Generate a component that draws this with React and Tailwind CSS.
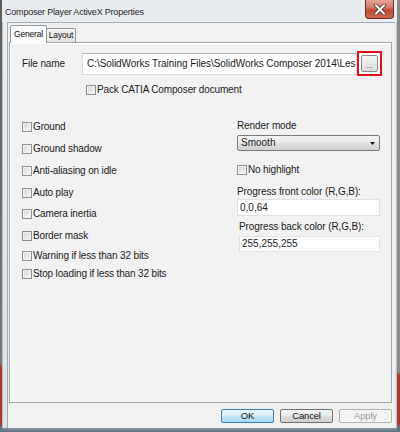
import React from 'react';

const leftChecks = [
    { label: 'Ground', mt: 'mt-0' },
    { label: 'Ground shadow', mt: 'mt-[10px]' },
    { label: 'Anti-aliasing on idle', mt: 'mt-[10px]' },
    { label: 'Auto play', mt: 'mt-[10px]' },
    { label: 'Camera inertia', mt: 'mt-[9px]' },
    { label: 'Border mask', mt: 'mt-[10px]' },
    { label: 'Warning if less than 32 bits', mt: 'mt-[8px]' },
    { label: 'Stop loading if less than 32 bits', mt: 'mt-[6px]' },
];

function Check({ label, className = '' }) {
    return (
        <div className={`flex items-center h-[12px] ${className}`}>
            <span className="w-[10px] h-[10px] shrink-0 border border-[#8f8f8f] bg-[linear-gradient(135deg,#d6d6d6,#f7f7f7)] shadow-[inset_0_0_0_1px_#f2f2f2]" />
            <span className="ml-[1px] text-[10px] leading-[12px] tracking-[-0.15px] text-[#1b1b1b] whitespace-nowrap">
                {label}
            </span>
        </div>
    );
}

function CloseButton() {
    return (
        <div className="mr-[3px] w-[29px] h-[19px] self-start rounded-b-[4px] border border-t-0 border-[#6b2a22] bg-[linear-gradient(to_bottom,#e4a596_0%,#d27563_45%,#bf4a36_55%,#cc6a55_100%)] flex items-center justify-center">
            <svg width="12" height="11" viewBox="0 0 12 11">
                <path d="M2 1.5 L10 9.5 M10 1.5 L2 9.5" stroke="#4a2a25" strokeWidth="3.6" strokeLinecap="square" />
                <path d="M2 1.5 L10 9.5 M10 1.5 L2 9.5" stroke="#ffffff" strokeWidth="2" strokeLinecap="square" />
            </svg>
        </div>
    );
}

function WinButton({ children, variant }) {
    const styles = {
        default: 'border-[#3c7fb1] bg-[linear-gradient(to_bottom,#eaf6fd_0%,#d9f0fc_45%,#bee6fd_55%,#a7d9f5_100%)] text-[#111]',
        normal: 'border-[#707070] bg-[linear-gradient(to_bottom,#f2f2f2_0%,#ebebeb_45%,#dddddd_55%,#cfcfcf_100%)] text-[#111]',
        disabled: 'border-[#adb2b5] bg-[#f4f4f4] text-[#9a9a9a]',
    };
    return (
        <div className={`w-[53px] h-[14px] rounded-[2px] border flex items-center justify-center text-[9.5px] leading-none tracking-[-0.2px] ${styles[variant]}`}>
            {children}
        </div>
    );
}

export default function App() {
    return (
        <div className="w-[400px] h-[432px] flex overflow-hidden font-['Liberation_Sans',Arial,sans-serif] select-none">
            {/* desktop behind, left */}
            <div className="w-[2px] bg-[linear-gradient(to_bottom,#5c5c5c_0%,#7a7a7a_84%,#a9392e_85%,#a9392e_98%,#5f7585_99%)]" />

            <div className="flex-1 flex flex-col">
                {/* window */}
                <div className="h-[428px] flex flex-col bg-[linear-gradient(to_bottom,#eaedf0,#dde2e7)]">
                    <div className="h-[22px] flex justify-between">
                        <div className="pl-[3px] pt-[7px] text-[9px] leading-[11px] tracking-[-0.2px] text-[#1e1e1e] whitespace-nowrap">
                            Composer Player ActiveX Properties
                        </div>
                        <CloseButton />
                    </div>

                    <div className="flex-1 flex">
                        <div className="w-[5px] border-l border-[#b9bfc5]" />

                        {/* client area */}
                        <div className="flex-1 flex flex-col bg-[#f0f0f0] border-t border-l border-[#a3abb3] pl-[1px] pr-[3px] pt-[2px]">
                            {/* tabs */}
                            <div className="h-[17px] flex items-end ml-[1px]">
                                <div className="relative z-10 w-[37px] h-[18px] -mb-px border border-b-0 border-[#8e9aa4] bg-[#fcfcfc] rounded-t-[2px] flex items-center justify-center text-[8.5px] tracking-[-0.2px] text-[#111]">
                                    General
                                </div>
                                <div className="w-[30px] h-[14px] -ml-px border border-b-0 border-[#8e9aa4] bg-[linear-gradient(to_bottom,#f5f5f5,#e3e3e3)] rounded-t-[2px] flex items-center justify-center text-[8.5px] tracking-[-0.2px] text-[#111]">
                                    Layout
                                </div>
                            </div>

                            {/* tab panel */}
                            <div className="h-[361px] border border-[#9ea6ae] bg-[#f2f2f2] shadow-[inset_1px_1px_0_#ffffff] pl-[12px] pt-[8px]">
                                <div className="flex items-center h-[25px]">
                                    <div className="w-[60px] text-[10px] leading-[12px] tracking-[-0.1px] text-[#1b1b1b]">
                                        File name
                                    </div>
                                    <div className="w-[275px] h-[22px] bg-white border border-[#d5dbe2] border-t-[#b7bcc3] pl-[4px] flex items-center overflow-hidden">
                                        <span className="text-[10px] leading-[12px] tracking-[-0.05px] text-[#1b1b1b] whitespace-nowrap">
                                            C:\SolidWorks Training Files\SolidWorks Composer 2014\Les
                                        </span>
                                    </div>
                                    <div className="w-[25px] h-[25px] border-[2px] border-[#e0101a] bg-white flex items-center justify-center">
                                        <div className="w-[17px] h-[17px] rounded-[2px] border border-[#8a8a8a] bg-[linear-gradient(to_bottom,#f4f4f4,#dcdcdc)] flex items-end justify-center pb-[2px] text-[7px] leading-none text-[#333]">
                                            ...
                                        </div>
                                    </div>
                                </div>

                                <Check label="Pack CATIA Composer document" className="mt-[8px] ml-[64px]" />

                                <div className="flex mt-[25px]">
                                    <div className="w-[215px] flex flex-col">
                                        {leftChecks.map((c) => (
                                            <Check key={c.label} label={c.label} className={c.mt} />
                                        ))}
                                    </div>

                                    <div className="w-[143px] flex flex-col -mt-px">
                                        <div className="h-[12px] text-[10px] leading-[12px] tracking-[-0.1px] text-[#1b1b1b]">
                                            Render mode
                                        </div>
                                        <div className="mt-[3px] h-[16px] rounded-[2px] border border-[#7a7a7a] bg-[linear-gradient(to_bottom,#f3f3f3_0%,#ebebeb_45%,#dedede_55%,#d2d2d2_100%)] flex items-center justify-between pl-[3px] pr-[4px]">
                                            <span className="text-[10px] leading-[12px] text-[#1b1b1b]">Smooth</span>
                                            <svg width="5" height="3" viewBox="0 0 5 3">
                                                <path d="M0 0 H5 L2.5 3 Z" fill="#111" />
                                            </svg>
                                        </div>
                                        <Check label="No highlight" className="mt-[13px]" />
                                        <div className="mt-[10px] h-[12px] text-[10px] leading-[12px] tracking-[-0.1px] text-[#1b1b1b] whitespace-nowrap">
                                            Progress front color (R,G,B):
                                        </div>
                                        <div className="mt-[1px] h-[17px] bg-white border border-[#dde2e8] pl-[2px] flex items-center text-[10px] leading-[12px] text-[#1b1b1b]">
                                            0,0,64
                                        </div>
                                        <div className="mt-[5px] ml-[2px] h-[12px] text-[10px] leading-[12px] tracking-[-0.1px] text-[#1b1b1b] whitespace-nowrap">
                                            Progress back color (R,G,B):
                                        </div>
                                        <div className="mt-[3px] ml-[2px] h-[16px] bg-white border border-[#dde2e8] pl-[2px] flex items-center text-[10px] leading-[12px] text-[#1b1b1b]">
                                            255,255,255
                                        </div>
                                    </div>
                                </div>
                            </div>

                            {/* dialog buttons */}
                            <div className="mt-[6px] flex justify-end gap-[6px]">
                                <WinButton variant="default">OK</WinButton>
                                <WinButton variant="normal">Cancel</WinButton>
                                <WinButton variant="disabled">Apply</WinButton>
                            </div>
                        </div>

                        <div className="w-[2px] border-r border-[#c2c7cc]" />
                    </div>
                </div>

                {/* desktop behind, bottom */}
                <div className="h-[4px] bg-[linear-gradient(to_bottom,#8296a4,#5b6f7e)]" />
            </div>

            {/* desktop behind, right */}
            <div className="w-[3px] bg-[linear-gradient(to_bottom,#8a8a8a_0%,#8a8a8a_86%,#a9392e_87%,#a9392e_98%,#5f7585_99%)]" />
        </div>
    );
}
